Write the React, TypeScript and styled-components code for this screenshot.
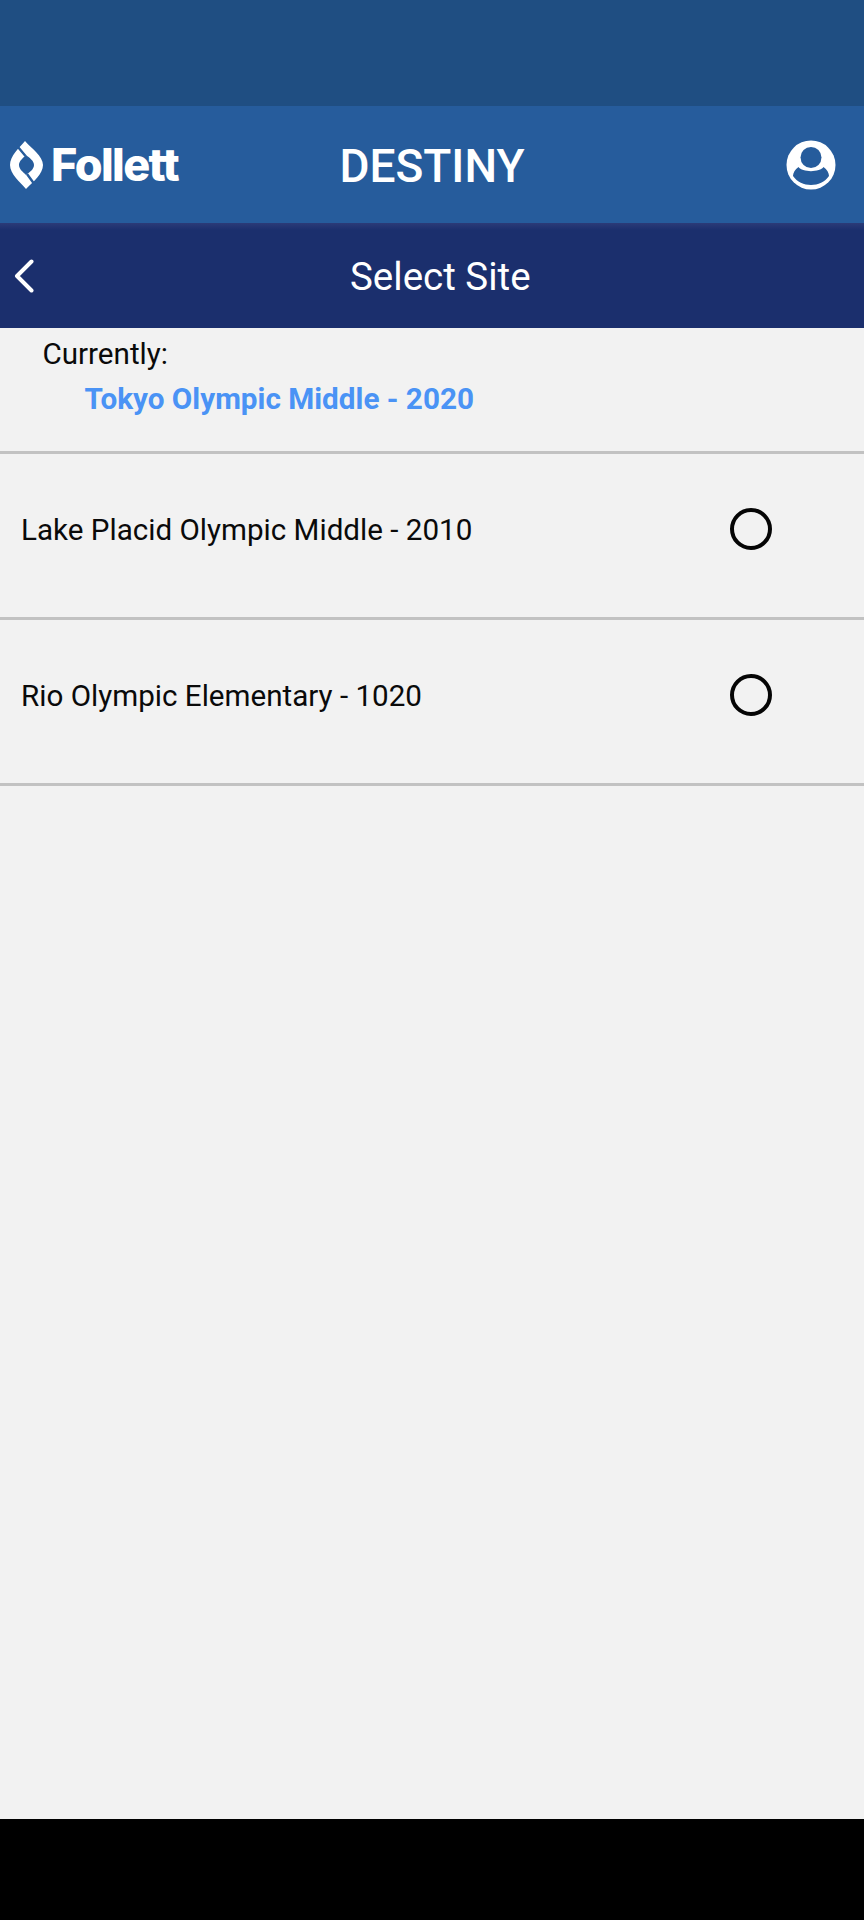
import styled, { createGlobalStyle } from 'styled-components';

const GlobalStyle = createGlobalStyle`
  html, body {
    margin: 0;
    padding: 0;
    background: #000;
  }
  * {
    box-sizing: border-box;
  }
`;

const Screen = styled.div`
  width: 864px;
  height: 1920px;
  display: flex;
  flex-direction: column;
  background: #000;
  font-family: Roboto, "Liberation Sans", sans-serif;
`;

const StatusBar = styled.div`
  height: 106px;
  flex: none;
  background: #1f4e82;
`;

const Header = styled.header`
  height: 117px;
  flex: none;
  display: grid;
  grid-template-columns: 1fr auto 1fr;
  align-items: center;
  padding: 0 28px 0 10px;
  background: #265c9c;
  color: #fff;
`;

const Brand = styled.div`
  display: flex;
  align-items: center;
  gap: 8px;
`;

const BrandName = styled.span`
  font-family: Inter, "Liberation Sans", sans-serif;
  font-size: 45px;
  font-weight: 800;
  letter-spacing: -1.6px;
  line-height: 1;
`;

const AppName = styled.h1`
  margin: 3px 0 0 18px;
  font-size: 46px;
  font-weight: 500;
  line-height: 1;
`;

const Account = styled.div`
  justify-self: end;
  display: flex;
`;

const TitleBar = styled.div`
  height: 105px;
  flex: none;
  display: flex;
  align-items: center;
  padding-left: 14px;
  background: linear-gradient(#2b3b78, #1b2f6d 7px);
  color: #fff;
`;

const TitleText = styled.h2`
  margin: 3px 0 0 316px;
  font-size: 38.5px;
  font-weight: 400;
  line-height: 1;
`;

const Content = styled.main`
  flex: 1;
  background: #f2f2f2;
`;

const Current = styled.section`
  height: 126px;
  padding: 9px 0 0 42.5px;
  border-bottom: 3px solid #c2c2c2;
`;

const CurrentLabel = styled.div`
  font-size: 29.6px;
  line-height: 34px;
  color: #0a0a0a;
`;

const CurrentSite = styled.div`
  margin: 11px 0 0 42px;
  font-size: 29.7px;
  font-weight: 700;
  line-height: 34px;
  color: #4a93f5;
`;

const SiteRow = styled.label`
  height: 166px;
  display: flex;
  justify-content: space-between;
  align-items: flex-start;
  padding: 59px 92.5px 0 21px;
  border-bottom: 3px solid #c2c2c2;
`;

const SiteName = styled.span`
  font-size: 29.6px;
  line-height: 34px;
  color: #0a0a0a;
`;

const Radio = styled.span`
  width: 42px;
  height: 42px;
  margin-top: -5px;
  border: 4px solid #050505;
  border-radius: 50%;
`;

const NavBar = styled.div`
  height: 101px;
  flex: none;
  background: #000;
`;

const sites = ['Lake Placid Olympic Middle - 2010', 'Rio Olympic Elementary - 1020'];

// Almond mark with a lens cut-out and two diagonal slits
const LogoMark = () => (
  <svg width="33" height="48" viewBox="0 0 33 48">
    <path
      fill="#fff"
      fillRule="evenodd"
      d="M15 0 C21 7 33 15 33 24 C33 33 23 41 16 48 C10 41 0 33 0 24 C0 15 9 7 15 0 Z M16 14 C20 17 24 20 24 24 C24 28 20 31 16 34 C13 31 9 28 9 24 C9 20 13 17 16 14 Z"
    />
    <path
      d="M8 6 L15.5 15 M17 33 L25 44"
      fill="none"
      stroke="#265c9c"
      strokeWidth="2.4"
    />
  </svg>
);

const UserIcon = () => (
  <svg width="50" height="50" viewBox="0 0 50 50">
    <circle cx="25" cy="25" r="24.5" fill="#fff" />
    <circle cx="25" cy="17.5" r="10.5" fill="#265c9c" />
    <path
      fill="#265c9c"
      d="M12.5 27 C16 32.5 34 32.5 37.5 27 C41 29.5 43 33 43 36 C39 42 32 45 25 45 C18 45 11 42 7 36 C7 33 9 29.5 12.5 27 Z"
    />
  </svg>
);

const BackIcon = () => (
  <svg width="20" height="34" viewBox="0 0 20 34">
    <path
      d="M17.5 2.5 L3 17 L17.5 31.5"
      fill="none"
      stroke="#fff"
      strokeWidth="4"
      strokeLinecap="round"
      strokeLinejoin="round"
    />
  </svg>
);

const App = () => {
  return (
    <Screen>
      <GlobalStyle />
      <StatusBar />
      <Header>
        <Brand>
          <LogoMark />
          <BrandName>Follett</BrandName>
        </Brand>
        <AppName>DESTINY</AppName>
        <Account>
          <UserIcon />
        </Account>
      </Header>
      <TitleBar>
        <BackIcon />
        <TitleText>Select Site</TitleText>
      </TitleBar>
      <Content>
        <Current>
          <CurrentLabel>Currently:</CurrentLabel>
          <CurrentSite>Tokyo Olympic Middle - 2020</CurrentSite>
        </Current>
        {sites.map((site) => (
          <SiteRow key={site}>
            <SiteName>{site}</SiteName>
            <Radio />
          </SiteRow>
        ))}
      </Content>
      <NavBar />
    </Screen>
  );
};

export default App;
